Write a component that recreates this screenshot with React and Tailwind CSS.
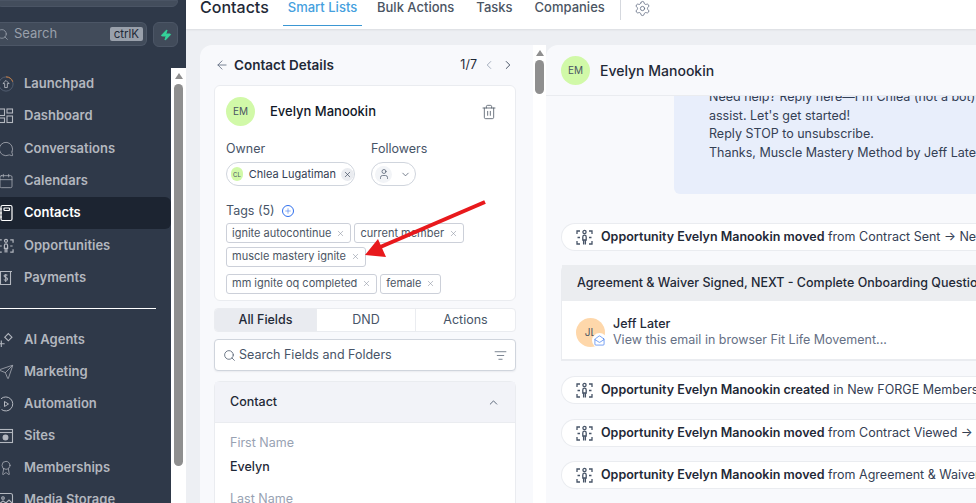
import React from "react";
import {
  ArrowLeft,
  Award,
  Calendar,
  ChevronDown,
  ChevronLeft,
  ChevronRight,
  ChevronUp,
  ListFilter,
  MailOpen,
  MessageCircle,
  Plus,
  Search,
  Send,
  Settings,
  Trash2,
  User,
  X,
  Zap,
} from "lucide-react";

const font = { fontFamily: "Inter, 'Noto Sans', sans-serif" };

function GridIcon() {
  return (
    <svg width="16" height="16" viewBox="0 0 16 16" fill="none" stroke="currentColor" strokeWidth="1.1">
      <rect x="1" y="1" width="5.5" height="6.5" />
      <rect x="9" y="1" width="5.5" height="4" />
      <rect x="1" y="10" width="5.5" height="4.5" />
      <rect x="9" y="8" width="5.5" height="6.5" />
    </svg>
  );
}

function LaunchIcon() {
  return (
    <svg width="18" height="18" viewBox="0 0 18 18" fill="none" stroke="currentColor" strokeWidth="1">
      <circle cx="9" cy="9" r="8" stroke="#566174" />
      <path d="M9 1a8 8 0 0 1 7.6 5.5" stroke="#d9823b" />
      <path d="M9 5 5.5 8.5H7.5V13H10.5V8.5H12.5Z" />
    </svg>
  );
}

function ContactsIcon() {
  return (
    <svg width="16" height="18" viewBox="0 0 16 18" fill="none" stroke="currentColor" strokeWidth="1.2">
      <rect x="3" y="1.5" width="11" height="15" rx="1.5" />
      <rect x="6" y="4" width="5.5" height="2.5" rx="0.5" />
      <path d="M1 5h3M1 9h3M1 13h3" />
    </svg>
  );
}

function OppIcon({ size = 17 }) {
  return (
    <svg width={size} height={size} viewBox="0 0 17 17" fill="none" stroke="currentColor" strokeWidth="1.3">
      <circle cx="8.5" cy="3" r="1.6" />
      <path d="M6.8 8c0-1 .8-1.8 1.7-1.8s1.7.8 1.7 1.8v3H6.8Z" />
      <path d="M7.6 11v4.5M9.4 11v4.5" />
      <path d="M1 5V2h3M13 2h3v3M1 12v3h3M16 12v3h-3" />
      <path d="M1.5 8.5h2.5M13 8.5h2.5" />
    </svg>
  );
}

function PaymentsIcon() {
  return (
    <svg width="16" height="16" viewBox="0 0 16 16" fill="none" stroke="currentColor" strokeWidth="1.1">
      <path d="M1 1.5h13M2.5 1.5v13h10v-13" />
      <path d="M9.4 5.4C9 4.9 8.3 4.8 7.6 4.8c-.9 0-1.5.5-1.5 1.3 0 1.8 3.4.9 3.4 2.8 0 .8-.7 1.4-1.8 1.4-.8 0-1.5-.3-1.8-.8M7.7 4v8" />
    </svg>
  );
}

function AgentsIcon() {
  return (
    <svg width="17" height="17" viewBox="0 0 17 17" fill="none" stroke="currentColor" strokeWidth="1.2">
      <path d="M11 1.2 14.8 5 11 8.8 7.2 5Z" />
      <path d="M3.5 8.5v7M0 12h7" />
    </svg>
  );
}

function PlayIcon() {
  return (
    <svg width="16" height="16" viewBox="0 0 16 16" fill="none" stroke="currentColor" strokeWidth="1">
      <path d="M3 2.8A7 7 0 1 1 3.5 13.5M1 8a7 7 0 0 0 .8 3.2" />
      <path d="M6.5 5.5v5L10.5 8Z" />
    </svg>
  );
}

function SitesIcon() {
  return (
    <svg width="16" height="16" viewBox="0 0 16 16" fill="none" stroke="currentColor" strokeWidth="1.1">
      <rect x="0.5" y="1.5" width="14" height="13" />
      <path d="M0.5 4.5h14" />
      <circle cx="7.5" cy="9.5" r="2.4" fill="currentColor" />
    </svg>
  );
}

function MediaIcon() {
  return (
    <svg width="16" height="16" viewBox="0 0 16 16" fill="none" stroke="currentColor" strokeWidth="1.1">
      <rect x="0.5" y="1.5" width="14" height="13" rx="2" />
      <circle cx="5" cy="6" r="1.3" />
      <path d="M1 12l4-3 3 2 3-3 3 3" />
    </svg>
  );
}

const navTop = [
  { label: "Launchpad", icon: <LaunchIcon />, h: "h-[32px]" },
  { label: "Dashboard", icon: <GridIcon />, h: "h-[32px]" },
  { label: "Conversations", icon: <MessageCircle size={16} strokeWidth={1.1} className="-scale-x-100" />, h: "h-[33px]" },
  { label: "Calendars", icon: <Calendar size={16} strokeWidth={1.1} />, h: "h-[32px]" },
  { label: "Contacts", icon: <ContactsIcon />, h: "h-[32px]", active: true },
  { label: "Opportunities", icon: <OppIcon size={16} />, h: "h-[33px]" },
  { label: "Payments", icon: <PaymentsIcon />, h: "h-[32px]" },
];

const navBottom = [
  { label: "AI Agents", icon: <AgentsIcon /> },
  { label: "Marketing", icon: <Send size={16} strokeWidth={1.1} /> },
  { label: "Automation", icon: <PlayIcon /> },
  { label: "Sites", icon: <SitesIcon /> },
  { label: "Memberships", icon: <Award size={16} strokeWidth={1.1} /> },
  { label: "Media Storage", icon: <MediaIcon /> },
];

function NavItem({ item }) {
  return (
    <div
      className={`flex shrink-0 items-center rounded-r-md ${item.h || "h-[32px]"} ${
        item.active ? "bg-[#1c2431] text-white" : "text-[#b3b7bf]"
      }`}
    >
      <div className="flex w-[24px] shrink-0 justify-start -ml-[2px] pr-[8px]">{item.icon}</div>
      <span className="ml-[2px] text-[13px] font-semibold whitespace-nowrap">{item.label}</span>
    </div>
  );
}

function Sidebar() {
  return (
    <div className="flex h-full w-[186px] shrink-0 flex-col bg-white">
      <div className="h-[68px] shrink-0 bg-[#2f3949] pr-[8px]">
        <div className="-ml-[4px] h-[7px] rounded-b-md border border-[#4a5464] bg-[#434d5c]" />
        <div className="mt-[15px] flex gap-[6px] pl-0">
          <div className="flex h-[24px] w-[147px] items-center rounded-l-none rounded-r-md border border-l-0 border-[#4c5666] bg-[#414b5a] pr-[3px] text-[#99a0ab]">
            <Search size={13} strokeWidth={1.5} className="-ml-[4px]" />
            <span className="ml-[5px] text-[13px]">Search</span>
            <span className="ml-auto rounded-[2px] bg-[#99a0ab] px-[4px] text-[11.5px] leading-[14px] text-[#1f2937]">ctrlK</span>
          </div>
          <div className="flex h-[25px] w-[25px] items-center justify-center rounded-md border border-[#4c5666] bg-[#414b5a]">
            <Zap size={12} className="fill-[#34d399] text-[#34d399]" />
          </div>
        </div>
      </div>
      <div className="flex min-h-0 flex-1">
        <div className="flex w-[171px] shrink-0 flex-col overflow-hidden bg-[#2f3949] pt-[0px]">
          <div className="h-[0px]" />
          {navTop.map((item) => (
            <NavItem key={item.label} item={item} />
          ))}
          <div className="mt-[14px] mb-[15px] h-px w-[156px] shrink-0 bg-white" />
          {navBottom.map((item) => (
            <NavItem key={item.label} item={item} />
          ))}
        </div>
        <Scrollbar className="w-[15px] pt-[5px]" thumb="mt-[5px] h-[382px] w-[9px]" />
      </div>
    </div>
  );
}

function Scrollbar({ className, thumb }) {
  return (
    <div className={`flex shrink-0 flex-col items-center bg-white ${className}`}>
      <div className="h-0 w-0 border-x-[4.5px] border-b-[6px] border-x-transparent border-b-[#8f8f8f]" />
      <div className={`rounded-full bg-[#8f8f8f] ${thumb}`} />
    </div>
  );
}

function TopBar() {
  return (
    <div className="flex h-[29px] shrink-0 items-start bg-white pl-[14px] shadow-[0_1px_2px_rgba(0,0,0,0.08)]">
      <span className="-mt-[3px] w-[83px] text-[16px] leading-[20px] font-medium text-[#1f2937]">Contacts</span>
      <div className="flex h-[26px] w-[79px] justify-center border-b border-[#3b97d3] text-[13px] leading-[14px] font-medium text-[#45a0de]">
        Smart Lists
      </div>
      <span className="ml-[15px] text-[13px] leading-[14px] font-medium text-[#4b5563]">Bulk Actions</span>
      <span className="ml-[22px] text-[13px] leading-[14px] font-medium text-[#4b5563]">Tasks</span>
      <span className="ml-[22px] text-[13px] leading-[14px] font-medium text-[#4b5563]">Companies</span>
      <div className="ml-[15px] h-[20px] w-px bg-[#d5d8de]" />
      <Settings size={17} strokeWidth={1.2} className="ml-[13px] text-[#667085]" />
    </div>
  );
}

function Tag({ label }) {
  return (
    <span className="flex h-[20px] items-center gap-[5px] rounded-[3px] border border-[#ccd0d9] bg-white pl-[5px] pr-[5px] text-[11px] text-[#4b5563]">
      {label}
      <X size={9} strokeWidth={1.5} className="text-[#8b93a1]" />
    </span>
  );
}

function ContactPanel() {
  return (
    <div className="flex w-[346px] shrink-0 overflow-hidden">
      <div className="flex w-[333px] shrink-0 flex-col overflow-hidden rounded-tl-xl bg-[#f8f9fc] px-[14px] pr-[17px]">
        <div className="flex h-[40px] shrink-0 items-center text-[#1f2937]">
          <ArrowLeft size={14} strokeWidth={1.5} className="ml-[1px] text-[#667085]" />
          <span className="ml-[5px] text-[13.5px] font-semibold">Contact Details</span>
          <span className="ml-auto text-[12.5px]">1/7</span>
          <ChevronLeft size={14} strokeWidth={1.5} className="ml-[5px] text-[#98a2b3]" />
          <ChevronRight size={14} strokeWidth={1.5} className="ml-[5px] mr-[1px] text-[#344054]" />
        </div>
        <div className="h-[216px] shrink-0 rounded-md border border-[#eaecf0] bg-white px-[11px] pt-[11px]">
          <div className="flex items-center">
            <div className="flex h-[29px] w-[29px] items-center justify-center rounded-full bg-[#d1f9a8] text-[10px] text-[#4b5563]">EM</div>
            <span className="ml-[15px] text-[13px] font-medium text-[#101828]">Evelyn Manookin</span>
            <Trash2 size={16} strokeWidth={1.2} className="ml-auto mr-[7px] text-[#4b5563]" />
          </div>
          <div className="mt-[14px] flex">
            <div className="w-[145px]">
              <div className="text-[12.5px] leading-[18px] text-[#475467]">Owner</div>
              <div className="mt-[4px] flex h-[24px] w-[129px] items-center rounded-full border border-[#d0d5dd] pl-[4px]">
                <span className="flex h-[14px] w-[14px] items-center justify-center rounded-full bg-[#d1f9a8] text-[6px] text-[#4b5563]">CL</span>
                <span className="ml-[6px] text-[11px] whitespace-nowrap text-[#344054]">Chlea Lugatiman</span>
                <span className="ml-[5px] flex h-[13px] w-[13px] shrink-0 items-center justify-center rounded-full bg-[#eaecf0]">
                  <X size={9} strokeWidth={1.7} className="text-[#344054]" />
                </span>
              </div>
            </div>
            <div>
              <div className="text-[12.5px] leading-[18px] text-[#475467]">Followers</div>
              <div className="mt-[4px] flex h-[24px] w-[45px] items-center rounded-full border border-[#d0d5dd] pl-[3px]">
                <span className="flex h-[17px] w-[17px] items-center justify-center rounded-full bg-[#f2f4f7]">
                  <User size={12} strokeWidth={1.4} className="text-[#475467]" />
                </span>
                <ChevronDown size={11} strokeWidth={1.6} className="ml-[8px] text-[#475467]" />
              </div>
            </div>
          </div>
          <div className="mt-[16px] flex h-[18px] items-center text-[12.5px] text-[#475467]">
            Tags (5)
            <span className="ml-[7px] flex h-[12px] w-[12px] items-center justify-center rounded-full border border-[#2f6fed]">
              <Plus size={8} strokeWidth={1.6} className="text-[#2f6fed]" />
            </span>
          </div>
          <div className="mt-[3px] flex flex-wrap gap-x-[3px] gap-y-[3.5px]">
            <Tag label="ignite autocontinue" />
            <Tag label="current member" />
            <Tag label="muscle mastery ignite" />
            <div className="w-full h-0" />
            <Tag label="mm ignite oq completed" />
            <Tag label="female" />
          </div>
        </div>
        <div className="mt-[7px] flex h-[24px] shrink-0 overflow-hidden rounded-[4px] border border-[#eaecf0] bg-white text-[12.5px] text-[#475467]">
          <div className="flex w-[101px] items-center justify-center bg-[#e9ebf0] font-medium text-[#1f2937]">All Fields</div>
          <div className="flex w-[100px] items-center justify-center border-x border-[#eaecf0]">DND</div>
          <div className="flex flex-1 items-center justify-center">Actions</div>
        </div>
        <div className="mt-[7px] flex h-[32px] shrink-0 items-center rounded-[4px] border border-[#d0d5dd] bg-white px-[8px] shadow-[0_1px_2px_rgba(16,24,40,0.06)]">
          <Search size={13} strokeWidth={1.4} className="text-[#475467]" />
          <span className="ml-[3px] text-[12.5px] text-[#475467]">Search Fields and Folders</span>
          <ListFilter size={13} strokeWidth={1.3} className="ml-auto text-[#475467]" />
        </div>
        <div className="mt-[10px] flex-1 rounded-t-md border-x border-t border-[#eaecf0] bg-white">
          <div className="flex h-[41px] items-center border-b border-[#eaecf0] bg-[#f2f3f8] px-[15px] text-[12.5px] font-medium text-[#1f2937]">
            Contact
            <ChevronUp size={13} strokeWidth={1.6} className="ml-auto text-[#475467]" />
          </div>
          <div className="px-[15px] pt-[11px]">
            <div className="text-[12.5px] leading-[18px] text-[#98a2b3]">First Name</div>
            <div className="mt-[6px] text-[12.5px] leading-[18px] font-medium text-[#1f2937]">Evelyn</div>
            <div className="mt-[14px] text-[12.5px] leading-[18px] text-[#98a2b3]">Last Name</div>
          </div>
        </div>
      </div>
      <Scrollbar className="w-[13px] bg-transparent pt-[5px]" thumb="mt-[4px] h-[34px] w-[9px]" />
    </div>
  );
}

function OppRow({ bold, rest, mt }) {
  return (
    <div className={`flex h-[28px] shrink-0 items-center rounded-l-full border border-r-0 border-[#eaecf0] bg-white pl-[14px] ${mt}`}>
      <span className="text-[#475467]">
        <OppIcon />
      </span>
      <span className="ml-[8px] text-[12.5px] whitespace-nowrap text-[#344054]">
        <b className="font-semibold text-[#1f2937]">{bold}</b> {rest}
      </span>
    </div>
  );
}

function ConversationPanel() {
  return (
    <div className="flex min-w-0 flex-1 flex-col overflow-hidden rounded-tl-xl bg-[#f8f9fc]">
      <div className="flex h-[51px] shrink-0 items-center border-b border-[#eaecf0] pl-[15px]">
        <div className="flex h-[29px] w-[29px] items-center justify-center rounded-full bg-[#d1f9a8] text-[10px] text-[#4b5563]">EM</div>
        <span className="ml-[10px] text-[14px] font-medium text-[#1f2937]">Evelyn Manookin</span>
      </div>
      <div className="min-h-0 flex-1 overflow-hidden pl-[15px]">
        <div className="ml-[113px] -mt-[10px] h-[108px] rounded-bl-md bg-[#e8eefb] pl-[35px] pt-[2px] text-[12.5px] leading-[18.7px] whitespace-nowrap text-[#344054]">
          <div>Need help? Reply here—I'm Chlea (not a bot) and I'm here to</div>
          <div>assist. Let's get started!</div>
          <div>Reply STOP to unsubscribe.</div>
          <div>Thanks, Muscle Mastery Method by Jeff Later</div>
        </div>
        <OppRow mt="mt-[29px]" bold="Opportunity Evelyn Manookin moved" rest="from Contract Sent → New FORGE" />
        <div className="mt-[14px] h-[96px] rounded-tl-md border-b-2 border-l border-[#eaecf0] bg-white">
          <div className="flex h-[36px] items-center bg-[#ebedf0] pl-[15px] text-[12.5px] font-medium whitespace-nowrap text-[#1f2937]">
            Agreement &amp; Waiver Signed, NEXT - Complete Onboarding Questionnaire
          </div>
          <div className="flex items-center pt-[15px] pl-[14px]">
            <div className="relative flex h-[29px] w-[29px] shrink-0 items-center justify-center rounded-full bg-[#fed7aa] text-[10px] text-[#4b5563]">
              JL
              <span className="absolute -right-[2px] -bottom-[1px] flex h-[15px] w-[15px] items-center justify-center rounded-full bg-white">
                <MailOpen size={11} strokeWidth={1.4} className="text-[#2f6fed]" />
              </span>
            </div>
            <div className="ml-[8px] text-[12.5px] leading-[16px]">
              <div className="font-medium text-[#1f2937]">Jeff Later</div>
              <div className="text-[#667085]">View this email in browser Fit Life Movement...</div>
            </div>
          </div>
        </div>
        <OppRow mt="mt-[15px]" bold="Opportunity Evelyn Manookin created" rest="in New FORGE Membership" />
        <OppRow mt="mt-[15px]" bold="Opportunity Evelyn Manookin moved" rest="from Contract Viewed → Agreement" />
        <OppRow mt="mt-[14px]" bold="Opportunity Evelyn Manookin moved" rest="from Agreement & Waiver Signed" />
      </div>
    </div>
  );
}

export default function App() {
  return (
    <div className="relative flex h-[503px] w-[976px] overflow-hidden bg-[#edeff3]" style={font}>
      <Sidebar />
      <div className="flex min-w-0 flex-1 flex-col">
        <TopBar />
        <div className="flex min-h-0 flex-1 pt-[16px] pl-[14px]">
          <ContactPanel />
          <ConversationPanel />
        </div>
      </div>
      {/* annotation arrow on top of the tags */}
      <svg className="absolute top-0 left-0" width="976" height="503" viewBox="0 0 976 503" fill="none">
        <path d="M485 202 378 248" stroke="#e8191c" strokeWidth="4" />
        <path d="M365 255 378 239 386 257Z" fill="#e8191c" />
      </svg>
    </div>
  );
}
